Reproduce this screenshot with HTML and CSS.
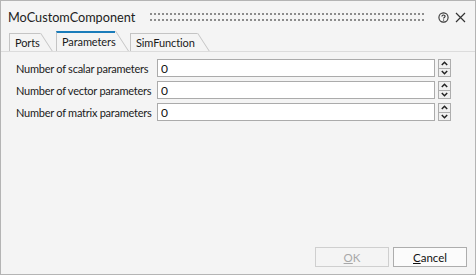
FILE: index.html
```html
<!DOCTYPE html>
<html lang="en">
<head>
  <meta charset="UTF-8">
  <title>MoCustomComponent</title>
  <link rel="stylesheet" href="styles.css">
</head>
<body>
  <div class="dialog">
    <div class="titlebar">
      <span class="title">MoCustomComponent</span>
      <div class="grip"></div>
      <svg class="help" width="11" height="11" viewBox="0 0 11 11">
        <circle cx="5.5" cy="5.5" r="4.6" fill="none" stroke="#333" stroke-width="1.1"/>
        <path d="M3.9 4.4 C3.9 2.6 7.1 2.6 7.1 4.3 C7.1 5.5 5.5 5.4 5.5 6.6" fill="none" stroke="#333" stroke-width="1.1"/>
        <rect x="5" y="7.5" width="1.1" height="1.1" fill="#333"/>
      </svg>
      <svg class="close" width="11" height="11" viewBox="0 0 11 11">
        <path d="M1 1 L10 10 M10 1 L1 10" stroke="#333" stroke-width="1.2"/>
      </svg>
    </div>

    <div class="tabs">
      <div class="tab tab-ports">Ports</div>
      <div class="tab tab-params active">Parameters</div>
      <div class="tab tab-sim">SimFunction</div>
    </div>

    <div class="pane">
      <div class="form">
        <label for="nScalar">Number of scalar parameters</label>
        <input id="nScalar" type="text" value="0">
        <div class="spin">
          <span><svg width="7" height="5" viewBox="0 0 7 5"><path d="M0.8 4 L3.5 1.3 L6.2 4" fill="none" stroke="#222" stroke-width="1.5"/></svg></span>
          <span><svg width="7" height="5" viewBox="0 0 7 5"><path d="M0.8 1 L3.5 3.7 L6.2 1" fill="none" stroke="#222" stroke-width="1.5"/></svg></span>
        </div>

        <label for="nVector">Number of vector parameters</label>
        <input id="nVector" type="text" value="0">
        <div class="spin">
          <span><svg width="7" height="5" viewBox="0 0 7 5"><path d="M0.8 4 L3.5 1.3 L6.2 4" fill="none" stroke="#222" stroke-width="1.5"/></svg></span>
          <span><svg width="7" height="5" viewBox="0 0 7 5"><path d="M0.8 1 L3.5 3.7 L6.2 1" fill="none" stroke="#222" stroke-width="1.5"/></svg></span>
        </div>

        <label for="nMatrix">Number of matrix parameters</label>
        <input id="nMatrix" type="text" value="0">
        <div class="spin">
          <span><svg width="7" height="5" viewBox="0 0 7 5"><path d="M0.8 4 L3.5 1.3 L6.2 4" fill="none" stroke="#222" stroke-width="1.5"/></svg></span>
          <span><svg width="7" height="5" viewBox="0 0 7 5"><path d="M0.8 1 L3.5 3.7 L6.2 1" fill="none" stroke="#222" stroke-width="1.5"/></svg></span>
        </div>
      </div>
    </div>

    <div class="buttons">
      <button class="btn" disabled><u>O</u>K</button>
      <button class="btn"><u>C</u>ancel</button>
    </div>
  </div>
</body>
</html>
```

FILE: styles.css
```css
* { box-sizing: border-box; }
body {
  margin: 0;
  font-family: Lato, "Liberation Sans", sans-serif;
  font-size: 11px;
  letter-spacing: -0.1px;
  color: #1a1a1a;
  background: #f4f4f4;
}
.dialog {
  width: 476px;
  height: 275px;
  border: 1px solid #b4b4b4;
  background: #f4f4f4;
  display: flex;
  flex-direction: column;
}
.titlebar {
  height: 30px;
  padding: 2px 9px 0 7px;
  display: flex;
  align-items: center;
}
.title {
  font-size: 12.7px;
  letter-spacing: 0;
  color: #222;
}
.grip {
  flex: 1;
  height: 8px;
  margin: 0 12px 0 15px;
  background-image:
    linear-gradient(90deg, #8c8c8c 2px, transparent 2px),
    linear-gradient(90deg, #8c8c8c 2px, transparent 2px);
  background-size: 4px 2px, 4px 2px;
  background-repeat: repeat-x;
  background-position: 0 0, 0 6px;
}
.help { margin-right: 6px; }

.tabs {
  height: 20px;
  padding-left: 8px;
  display: flex;
  align-items: flex-end;
}
.tab {
  position: relative;
  height: 18px;
  padding: 2px 0 0 5px;
  border-left: 1px solid #c4c4c4;
  border-top: 1px solid #c4c4c4;
  color: #1a1a1a;
}
.tab::after {
  content: '';
  position: absolute;
  top: -1px;
  left: 100%;
  height: calc(100% + 1px);
  border-right: 1px solid #c4c4c4;
  transform: skewX(33deg);
  transform-origin: top left;
}
.tab-ports { width: 31px; margin-right: 16px; }
.tab-params { width: 59px; margin-right: 15px; }
.tab-sim { width: 67px; }
.tab.active {
  height: 20px;
  padding-top: 2px;
  border-top: 2px solid #1a7cba;
  z-index: 1;
}
.tab.active::after { top: -2px; height: calc(100% + 2px); }

.pane {
  flex: 1;
  border-top: 1px solid #dcdcdc;
  padding: 7px 0 0 15px;
}
.form {
  display: grid;
  grid-template-columns: 141px 278px 16px;
  row-gap: 4px;
  align-items: center;
}
.form label {
  white-space: nowrap;
  letter-spacing: -0.25px;
}
.form input {
  height: 18px;
  border: 1px solid #ababab;
  background: #fff;
  padding: 0 3px;
  font: inherit;
  font-size: 12px;
  color: #111;
  outline: none;
}
.spin {
  height: 18px;
  margin-left: 3px;
  display: flex;
  flex-direction: column;
}
.spin span {
  flex: 1;
  border: 1px solid #adadad;
  background: #f0f0f0;
  display: flex;
  align-items: center;
  justify-content: center;
}
.spin span + span { border-top: none; }

.buttons {
  display: flex;
  justify-content: flex-end;
  gap: 4px;
  padding: 0 8px 7px 0;
}
.btn {
  width: 74px;
  height: 20px;
  padding: 0;
  font: inherit;
  font-size: 11.5px;
  color: #111;
  background: #fbfbfb;
  border: 1px solid #adadad;
}
.btn:disabled {
  color: #a8a8a8;
  border-color: #cfcfcf;
  background: #f4f4f4;
}
```
